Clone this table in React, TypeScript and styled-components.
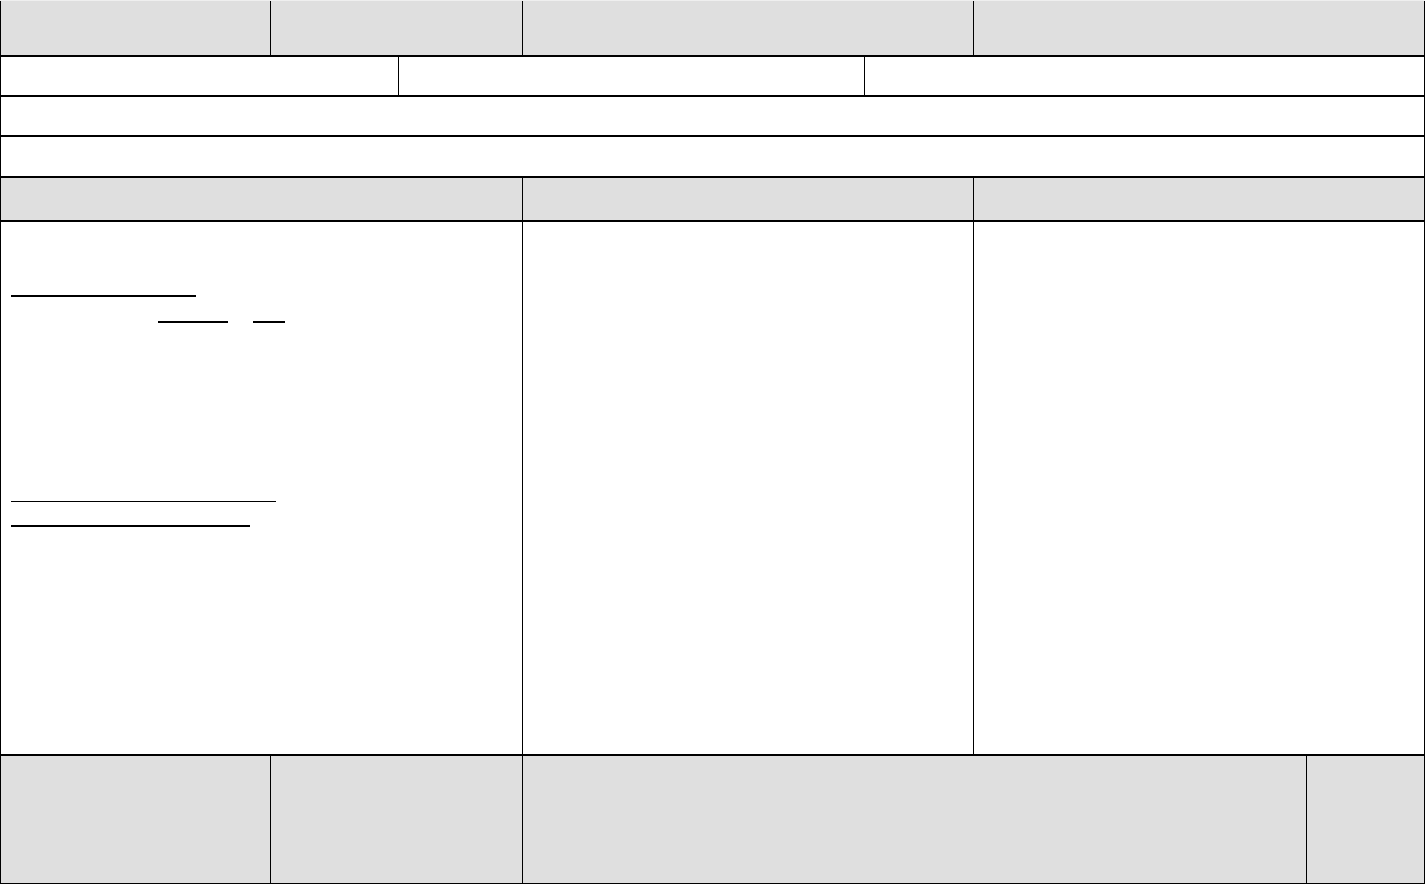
import styled, { createGlobalStyle } from "styled-components";

const GlobalStyle = createGlobalStyle`
  html, body {
    margin: 0;
    padding: 0;
    background: #ffffff;
  }
  body {
    font-family: "Liberation Sans", Arial, sans-serif;
  }
`;

// the black background shows through the gaps and acts as the ruling
const Sheet = styled.div`
  display: grid;
  grid-template-columns: 269px 127px 123px 341px 108px 332px 117px;
  grid-template-rows: 54px 38px 38px 39px 42px 532px 127px;
  column-gap: 1px;
  row-gap: 2px;
  width: 1425px;
  box-sizing: border-box;
  padding: 0 1px 1px 1px;
  border-top: 1px solid #efefef;
  background: #000000;
`;

interface CellProps {
  $from: number;
  $to: number;
  $shade?: boolean;
}

const Cell = styled.div<CellProps>`
  grid-column: ${(p) => p.$from} / ${(p) => p.$to + 1};
  background: ${(p) => (p.$shade ? "#dfdfdf" : "#ffffff")};
  min-width: 0;
`;

const FormCell = styled(Cell)`
  display: flex;
  flex-direction: column;
  padding-left: 10px;
`;

interface BlankRowProps {
  $top: number;
  $indent?: number;
}

const BlankRow = styled.div<BlankRowProps>`
  display: flex;
  gap: 25px;
  margin-top: ${(p) => p.$top}px;
  padding-left: ${(p) => p.$indent || 0}px;
`;

interface BlankProps {
  $w: number;
  $thick?: number;
}

// empty fill-in line, like underlined spaces in a form
const Blank = styled.span<BlankProps>`
  display: block;
  width: ${(p) => p.$w}px;
  border-bottom: ${(p) => p.$thick || 2}px solid #000000;
`;

export default function App() {
  return (
    <>
      <GlobalStyle />
      <Sheet>
        {/* header row */}
        <Cell $from={1} $to={1} $shade />
        <Cell $from={2} $to={3} $shade />
        <Cell $from={4} $to={5} $shade />
        <Cell $from={6} $to={7} $shade />

        <Cell $from={1} $to={2} />
        <Cell $from={3} $to={4} />
        <Cell $from={5} $to={7} />

        <Cell $from={1} $to={7} />
        <Cell $from={1} $to={7} />

        <Cell $from={1} $to={3} $shade />
        <Cell $from={4} $to={5} $shade />
        <Cell $from={6} $to={7} $shade />

        <FormCell $from={1} $to={3}>
          <BlankRow $top={73}>
            <Blank $w={185} />
          </BlankRow>
          <BlankRow $top={24} $indent={147}>
            <Blank $w={70} />
            <Blank $w={32} />
          </BlankRow>
          <BlankRow $top={178}>
            <Blank $w={265} $thick={1} />
          </BlankRow>
          <BlankRow $top={23}>
            <Blank $w={239} />
          </BlankRow>
        </FormCell>
        <Cell $from={4} $to={5} />
        <Cell $from={6} $to={7} />

        {/* footer row */}
        <Cell $from={1} $to={1} $shade />
        <Cell $from={2} $to={3} $shade />
        <Cell $from={4} $to={6} $shade />
        <Cell $from={7} $to={7} $shade />
      </Sheet>
    </>
  );
}
